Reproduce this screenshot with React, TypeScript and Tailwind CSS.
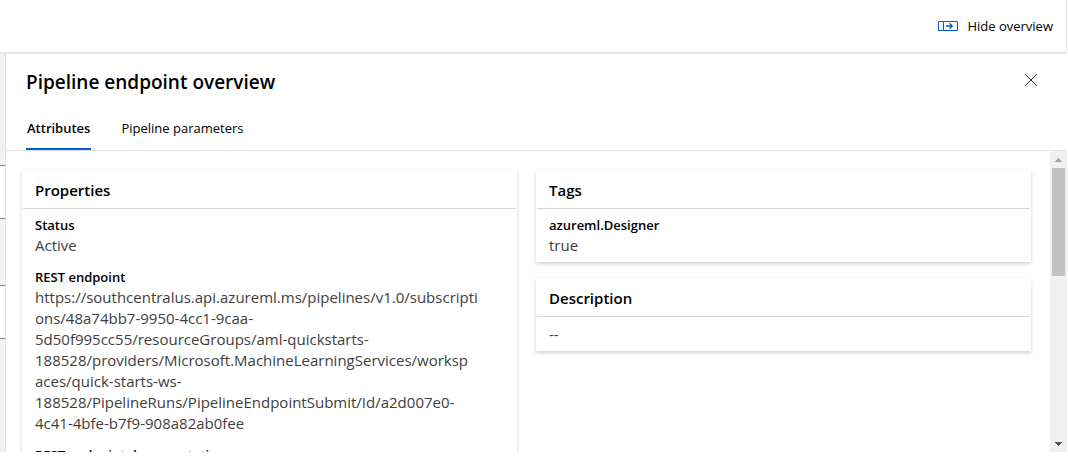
import type { ReactNode } from "react";

const endpointLines = [
  "https://southcentralus.api.azureml.ms/pipelines/v1.0/subscripti",
  "ons/48a74bb7-9950-4cc1-9caa-",
  "5d50f995cc55/resourceGroups/aml-quickstarts-",
  "188528/providers/Microsoft.MachineLearningServices/worksp",
  "aces/quick-starts-ws-",
  "188528/PipelineRuns/PipelineEndpointSubmit/Id/a2d007e0-",
  "4c41-4bfe-b7f9-908a82ab0fee",
];

function Card({ title, children }: { title: string; children: ReactNode }) {
  return (
    <section className="bg-white px-px pb-1 shadow-[0_2px_4px_rgba(0,0,0,0.18)]">
      <h2 className="flex h-[39px] items-center border-b border-[#d6d6d6] px-3 pt-[2px] text-[15px] leading-5 font-semibold text-black">
        {title}
      </h2>
      <div className="px-3 pt-[7px]">{children}</div>
    </section>
  );
}

function Field({ label, children }: { label: string; children?: ReactNode }) {
  return (
    <div className="mb-3">
      <dt className="h-[19px] text-[13px] leading-[18px] font-semibold text-black">{label}</dt>
      <dd className="text-[15px] leading-[21px] whitespace-nowrap text-[#404040]">{children}</dd>
    </div>
  );
}

export default function App() {
  return (
    <div className="flex h-screen flex-col overflow-hidden bg-white pb-[14px] font-['Open_Sans','Noto_Sans',sans-serif] text-black">
      <header className="mr-px flex h-[54px] shrink-0 items-center justify-end border-r border-b-2 border-[#e6e6e6] pr-[13px]">
        <button type="button" className="flex items-center gap-2 text-[13px] leading-5">
          <svg width="21" height="12" viewBox="0 0 21 12" fill="none" stroke="#015cda" aria-hidden="true">
            <path d="M.5 1.5h19v9H.5zM5.5 1.5v9" />
            <path d="M8 6h6.5M11.5 3.2 14.3 6l-2.8 2.8" strokeWidth="1.3" />
          </svg>
          Hide overview
        </button>
      </header>

      <div className="flex min-h-0 flex-1">
        <div className="w-[6px] shrink-0 overflow-hidden border-r border-[#e0e0e0]" aria-hidden="true">
          <div className="h-28 border-b border-[#858585] bg-[#f2f2f2]" />
          <div className="h-[53px] border-b border-[#858585]" />
          <div className="h-[67px] border-b border-[#858585] bg-[#f2f2f2]" />
          <div className="h-[53px] border-b border-[#858585]" />
          <div className="h-full bg-[#f2f2f2]" />
        </div>

        <main className="mr-px flex min-w-0 flex-1 flex-col">
          <div className="flex h-[56px] shrink-0 items-center justify-between pr-[29px] pl-5">
            <h1 className="text-[19px] leading-7 font-semibold">Pipeline endpoint overview</h1>
            <button type="button" aria-label="Close" className="pb-1">
              <svg width="14" height="14" viewBox="0 0 14 14" fill="none" stroke="#333" aria-hidden="true">
                <path d="m1 1 12 12M13 1 1 13" />
              </svg>
            </button>
          </div>

          <div role="tablist" className="flex h-[41px] shrink-0 gap-[26px] border-b border-[#e6e6e6] pl-5 text-[13px]">
            <button type="button" role="tab" aria-selected="true" className="h-10 border-b-2 border-[#015cda] px-px font-semibold">
              Attributes
            </button>
            <button type="button" role="tab" aria-selected="false" className="h-10 border-b-2 border-transparent px-1">
              Pipeline parameters
            </button>
          </div>

          <div className="flex min-h-0 flex-1">
            <div className="grid min-w-0 flex-1 grid-cols-2 items-start gap-[19px] overflow-hidden pt-[19px] pr-[19px] pl-4">
              <Card title="Properties">
                <dl>
                  <Field label="Status">Active</Field>
                  <Field label="REST endpoint">
                    {endpointLines.map((line) => (
                      <span key={line} className="block">
                        {line}
                      </span>
                    ))}
                  </Field>
                  <Field label="REST endpoint documentation" />
                </dl>
              </Card>
              <div className="flex flex-col gap-4">
                <Card title="Tags">
                  <dl className="-mb-[10px]">
                    <Field label="azureml.Designer">true</Field>
                  </dl>
                </Card>
                <Card title="Description">
                  <p className="pb-[2px] text-[15px] leading-[21px] text-[#404040]">--</p>
                </Card>
              </div>
            </div>

            <div className="flex w-[17px] shrink-0 flex-col items-center bg-[#f0f0f0]">
              <button type="button" aria-label="Scroll up" className="flex h-[17px] items-center">
                <svg width="7" height="4" viewBox="0 0 7 4" fill="#a3a3a3" shapeRendering="crispEdges" aria-hidden="true">
                  <path d="M3 0h1v1h1v1h1v1h1v1H0V3h1V2h1V1h1z" />
                </svg>
              </button>
              <div className="h-[108px] w-[13px] bg-[#c1c1c1]" />
              <button type="button" aria-label="Scroll down" className="mt-auto flex h-[17px] items-center">
                <svg width="7" height="4" viewBox="0 0 7 4" fill="#505050" shapeRendering="crispEdges" aria-hidden="true">
                  <path d="M0 0h7v1H6v1H5v1H4v1H3V3H2V2H1V1H0z" />
                </svg>
              </button>
            </div>
          </div>
        </main>
      </div>
    </div>
  );
}
